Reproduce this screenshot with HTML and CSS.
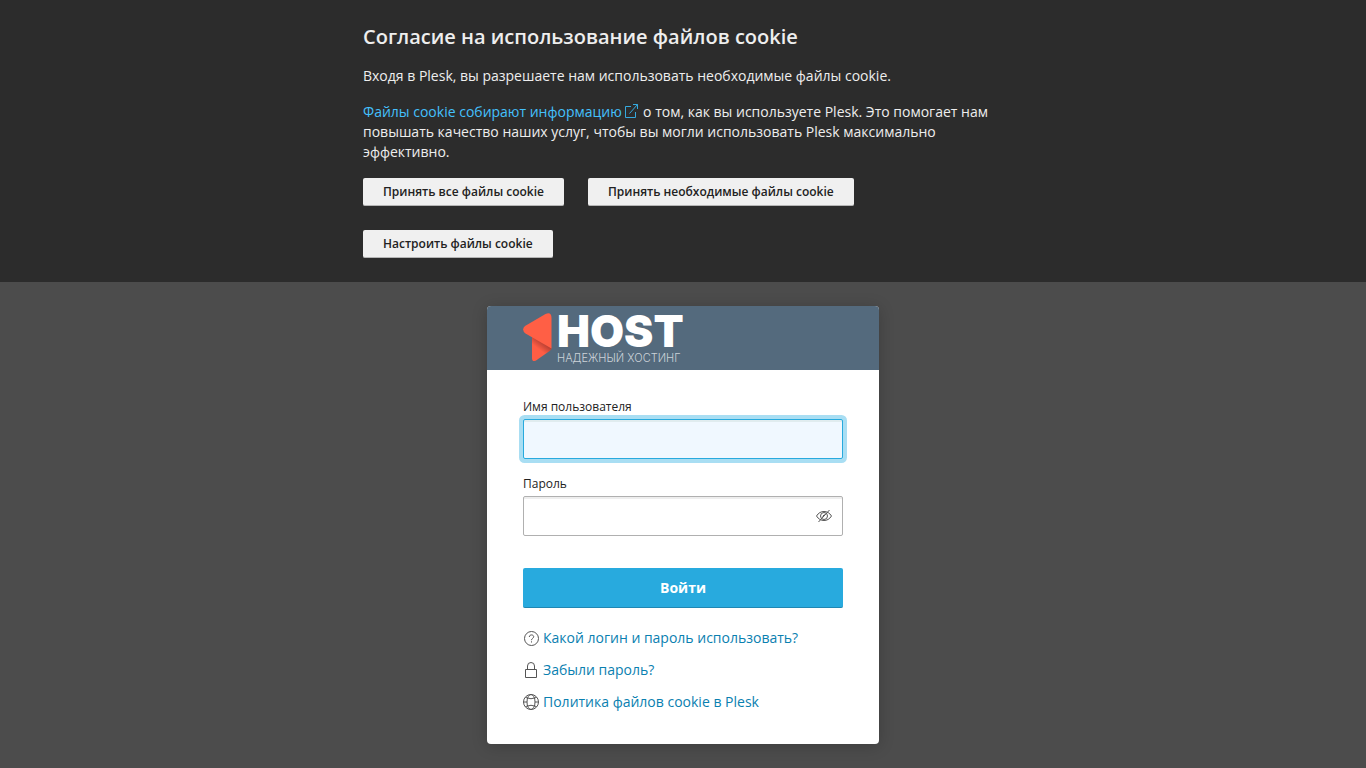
FILE: index.html
```html
<!DOCTYPE html>
<html lang="ru">
<head>
  <meta charset="UTF-8">
  <meta name="viewport" content="width=device-width, initial-scale=1.0">
  <title>Plesk</title>
  <link rel="stylesheet" href="styles.css">
</head>
<body>
  <section class="cookie-bar">
    <div class="cookie-content">
      <h1>Согласие на использование файлов cookie</h1>
      <p>Входя в Plesk, вы разрешаете нам использовать необходимые файлы cookie.</p>
      <p><a href="#">Файлы cookie собирают информацию <svg class="icon-external" width="14" height="16" viewBox="2 0 14 16"><path d="M8 3.500H2.500v11h10V9M6.500 10.500L14.500 1.500M10 1.500h4.500V6"/></svg></a> о том, как вы используете Plesk. Это помогает нам повышать качество наших услуг, чтобы вы могли использовать Plesk максимально эффективно.</p>
      <div class="cookie-buttons">
        <button type="button" class="btn">Принять все файлы cookie</button>
        <button type="button" class="btn">Принять необходимые файлы cookie</button>
        <button type="button" class="btn">Настроить файлы cookie</button>
      </div>
    </div>
  </section>

  <main class="login">
    <header class="login-header">
      <svg class="logo-mark" width="30" height="50" viewBox="0 0 30 50">
        <defs>
          <linearGradient id="fold" x1="0.65" y1="0.25" x2="0.45" y2="0.6">
            <stop offset="0" stop-color="#a83a30"/>
            <stop offset="1" stop-color="#ff5d44"/>
          </linearGradient>
        </defs>
        <path d="M9 22L28.500 34.500Q28.800 36.500 27 37.800L13 47.500Q9 49.500 9 45z" fill="url(#fold)"/>
        <path d="M2 13L22.500 1Q28.500-1.500 28.500 5V35.500L2.500 20.500Q-2 16.500 2 13z" fill="#ff5f45"/>
      </svg>
      <div class="logo-text">
        <span class="logo-name">HOST</span>
        <span class="logo-slogan">НАДЕЖНЫЙ ХОСТИНГ</span>
      </div>
    </header>

    <form class="login-form">
      <label for="login-name">Имя пользователя</label>
      <input type="text" id="login-name" class="input active">

      <label for="password">Пароль</label>
      <div class="password">
        <input type="password" id="password" class="input">
        <button type="button" class="eye" aria-label="Показать пароль">
          <svg class="icon" width="16" height="16" viewBox="0 0 16 16"><path d="M.5 8C2.500 4.800 5 3.500 8 3.500S13.500 4.800 15.500 8C13.500 11.200 11 12.500 8 12.500S2.500 11.200.5 8zM2.500 14L13.500 2"/><circle cx="8" cy="8" r="3.500"/><path d="M6.500 8.500L8.500 6.500"/></svg>
        </button>
      </div>

      <button type="submit" class="submit">Войти</button>
    </form>

    <ul class="links">
      <li>
        <svg class="icon" width="16" height="16" viewBox="0 0 16 16"><circle cx="8.500" cy="8.500" r="7"/><path d="M6.300 7C6.300 4.200 10.700 4.300 10.700 6.800C10.700 8.300 8.500 8.300 8.500 10.200M8.500 11.300v1.200"/></svg>
        <a href="#">Какой логин и пароль использовать?</a>
      </li>
      <li>
        <svg class="icon" width="16" height="16" viewBox="0 0 16 16"><path d="M2.500 7.500h11v8h-11zM4.500 7.500V4Q4.500.5 8 .5T11.500 4v3.500"/></svg>
        <a href="#">Забыли пароль?</a>
      </li>
      <li>
        <svg class="icon" width="16" height="16" viewBox="0 0 16 16"><circle cx="8" cy="8" r="7.500"/><ellipse cx="8" cy="8" rx="4" ry="7.500"/><path d="M2.500 3.500Q8 6 13.500 3.500M2.500 12.500Q8 10 13.500 12.500M.5 8H4M12 8h3.500"/></svg>
        <a href="#">Политика файлов cookie в Plesk</a>
      </li>
    </ul>
  </main>
</body>
</html>
```

FILE: styles.css
```css
* {
  box-sizing: border-box;
}
body {
  margin: 0;
  background: #4c4c4c;
  color: #222;
  font-family: "Open Sans", sans-serif;
  font-size: 14px;
  line-height: 20px;
}
button, input {
  font-family: inherit;
}
a {
  color: #0a80b0;
  text-decoration: none;
}
a:hover {
  text-decoration: underline;
}

/* cookie consent */
.cookie-bar {
  padding: 24px;
  background: #2c2c2c;
  color: #eee;
}
.cookie-content {
  max-width: 640px;
  margin: 0 auto;
}
.cookie-content h1 {
  margin: 0 0 16px;
  font-size: 20px;
  line-height: 26px;
  font-weight: 600;
}
.cookie-content p {
  margin: 0 0 16px;
}
.cookie-content a {
  color: #44c0fc;
}
.icon-external {
  fill: none;
  stroke: #35a9de;
  vertical-align: -2px;
}
.cookie-buttons {
  display: flex;
  flex-wrap: wrap;
  gap: 24px;
}
.btn {
  height: 28px;
  padding: 0 20px;
  border: none;
  border-bottom: 1px solid #b5b5b5;
  border-radius: 2px;
  background: #f0f0f0;
  color: #222;
  font-size: 12px;
  font-weight: 600;
  cursor: pointer;
}

/* login card */
.login {
  max-width: 392px;
  margin: 24px auto;
  border-radius: 4px;
  background: #fff;
  box-shadow: 0 2px 16px rgba(0, 0, 0, 0.2);
  overflow: hidden;
}
.login-header {
  display: flex;
  align-items: center;
  gap: 4px;
  height: 64px;
  padding: 0 36px;
  background: #546a7d;
}
.logo-text {
  display: flex;
  flex-direction: column;
  gap: 2px;
  padding-top: 2px;
  color: #fff;
  font-family: Inter, sans-serif;
}
.logo-name {
  font-size: 44px;
  line-height: 36px;
  font-weight: 900;
}
.logo-slogan {
  color: #ccd3d9;
  font-size: 11px;
  line-height: 14px;
  font-weight: 300;
}
.login-form {
  padding: 28px 36px 0;
}
.login-form label {
  display: block;
  margin-bottom: 3px;
  font-size: 12px;
  line-height: 18px;
}
.input {
  display: block;
  width: 100%;
  height: 40px;
  margin-bottom: 16px;
  padding: 0 12px;
  border: 1px solid #b0b0b0;
  border-radius: 2px;
  background: #fff;
  box-shadow: inset 0 2px 0 #eee;
  font-size: 14px;
  outline: none;
}
.input.active, .input:focus {
  border-color: #28aade;
  background: #f0f8ff;
  box-shadow: 0 0 0 4px #a9def3, inset 0 2px 0 #e0ecef;
}
.password {
  position: relative;
}
.password .input {
  padding-right: 40px;
}
.eye {
  position: absolute;
  top: 0;
  right: 0;
  display: flex;
  align-items: center;
  justify-content: center;
  width: 38px;
  height: 40px;
  padding: 0;
  border: none;
  background: none;
  cursor: pointer;
}
.icon {
  flex: none;
  fill: none;
  stroke: #555;
}
.submit {
  display: block;
  width: 100%;
  height: 40px;
  margin: 32px 0 20px;
  border: none;
  border-bottom: 1px solid #1f87b3;
  border-radius: 2px;
  background: #28aade;
  color: #fff;
  font-size: 14px;
  font-weight: 700;
  cursor: pointer;
}
.links {
  display: flex;
  flex-direction: column;
  gap: 12px;
  margin: 0;
  padding: 0 36px 32px;
  list-style: none;
}
.links li {
  display: flex;
  align-items: center;
  gap: 4px;
}
```
